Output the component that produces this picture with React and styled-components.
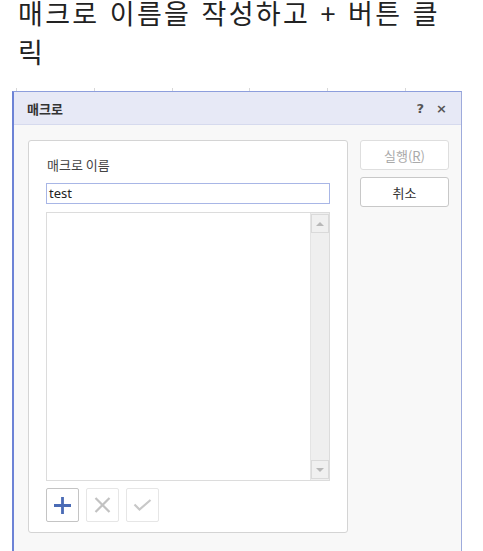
import React from "react";
import styled, { createGlobalStyle } from "styled-components";

const Global = createGlobalStyle`
  html, body { margin: 0; padding: 0; background: #fff; }
  body { font-family: "Noto Sans CJK KR", "Noto Sans", sans-serif; }
`;

const Page = styled.div`
  width: 483px;
  height: 551px;
  overflow: hidden;
  background: #fff;
`;

const Heading = styled.h2`
  margin: -6px 0 0 0;
  padding: 0 0 0 18px;
  width: 428px;
  height: 80px;
  font-family: "Noto Sans CJK KR", sans-serif;
  font-weight: 400;
  font-size: 27px;
  line-height: 38.5px;
  letter-spacing: 2.3px;
  word-spacing: 2px;
  color: #222;
`;

const Ticks = styled.div`
  display: flex;
  margin: 14px 0 0 16px;
  height: 3px;
`;

const Tick = styled.div`
  width: 78px;
  border-left: 1px solid #d8d8d8;
`;

const Dialog = styled.div`
  margin-left: 12px;
  width: 450px;
  box-sizing: border-box;
  border-left: 2px solid #6d83d6;
  border-right: 1px solid #9eabdc;
  border-top: 1px solid #8d9edc;
  background: #f8f8f8;
  height: 470px;
`;

const TitleBar = styled.div`
  display: flex;
  align-items: center;
  justify-content: space-between;
  height: 32px;
  padding: 0 14px 0 13px;
  background: #e7e9f6;
  border-bottom: 1px solid #d6daee;
`;

const Title = styled.span`
  font-size: 13px;
  font-weight: 700;
  color: #333;
`;

const TitleIcons = styled.div`
  display: flex;
  gap: 12px;
  align-items: center;
  font-family: "DejaVu Sans", sans-serif;
  font-weight: 700;
  font-size: 13px;
  color: #555;
`;

const Body = styled.div`
  display: flex;
  gap: 12px;
  padding: 15px 0 0 14px;
  align-items: flex-start;
`;

const Group = styled.div`
  width: 320px;
  box-sizing: border-box;
  background: #fff;
  border: 1px solid #d4d4d4;
  border-radius: 3px;
  padding: 14px 16px 10px 18px;
  display: flex;
  flex-direction: column;
`;

const Label = styled.div`
  font-size: 13px;
  color: #444;
  line-height: 20px;
  height: 28px;
`;

const Input = styled.div`
  width: 284px;
  height: 21px;
  box-sizing: border-box;
  border: 1px solid #a8b6e6;
  font-family: "Noto Sans", sans-serif;
  font-size: 13px;
  line-height: 19px;
  padding-left: 2px;
  color: #222;
  margin-left: -1px;
`;

const List = styled.div`
  margin-top: 8px;
  margin-left: -1px;
  width: 284px;
  height: 269px;
  box-sizing: border-box;
  border: 1px solid #dcdcdc;
  display: flex;
  justify-content: flex-end;
`;

const Scrollbar = styled.div`
  width: 18px;
  background: #efefef;
  border-left: 1px solid #e4e4e4;
  display: flex;
  flex-direction: column;
  justify-content: space-between;
`;

const ScrollBtn = styled.div`
  height: 19px;
  box-sizing: border-box;
  border: 1px solid #dadada;
  background: #f0f0f0;
  display: flex;
  align-items: center;
  justify-content: center;
  margin: 1px 0;
`;

const Arrow = styled.div`
  width: 0;
  height: 0;
  border-left: 4px solid transparent;
  border-right: 4px solid transparent;
  ${(p) =>
    p.$up
      ? "border-bottom: 4px solid #b8b8b8;"
      : "border-top: 4px solid #b8b8b8;"}
`;

const Tools = styled.div`
  display: flex;
  gap: 7px;
  margin-top: 7px;
  margin-left: -1px;
`;

const ToolBtn = styled.div`
  width: 33px;
  height: 34px;
  box-sizing: border-box;
  border: 1px solid ${(p) => (p.$active ? "#c4c4c4" : "#e6e6e6")};
  border-radius: 2px;
  background: #fff;
  display: flex;
  align-items: center;
  justify-content: center;
`;

const Side = styled.div`
  display: flex;
  flex-direction: column;
  gap: 7px;
`;

const SideBtn = styled.div`
  width: 89px;
  height: 30px;
  box-sizing: border-box;
  border: 1px solid ${(p) => (p.$disabled ? "#dedede" : "#c8c8c8")};
  border-radius: 3px;
  background: #fff;
  display: flex;
  align-items: center;
  justify-content: center;
  font-size: 13px;
  color: ${(p) => (p.$disabled ? "#aaa" : "#333")};
`;

const U = styled.span`
  text-decoration: underline;
`;

export default function App() {
  return (
    <Page>
      <Global />
      <Heading>매크로 이름을 작성하고 + 버튼 클릭</Heading>
      <Ticks>
        {[0, 1, 2, 3, 4, 5].map((i) => (
          <Tick key={i} />
        ))}
      </Ticks>
      <Dialog>
        <TitleBar>
          <Title>매크로</Title>
          <TitleIcons>
            <span>?</span>
            <span>×</span>
          </TitleIcons>
        </TitleBar>
        <Body>
          <Group>
            <Label>매크로 이름</Label>
            <Input>test</Input>
            <List>
              <Scrollbar>
                <ScrollBtn>
                  <Arrow $up />
                </ScrollBtn>
                <ScrollBtn>
                  <Arrow />
                </ScrollBtn>
              </Scrollbar>
            </List>
            <Tools>
              <ToolBtn $active>
                <svg width="19" height="19" viewBox="0 0 19 19">
                  <path d="M9.5 1v17M1 9.5h17" stroke="#4a6bb5" strokeWidth="2.8" />
                </svg>
              </ToolBtn>
              <ToolBtn>
                <svg width="17" height="16" viewBox="0 0 17 16">
                  <path d="M1.5 1l14 14M15.5 1l-14 14" stroke="#c2c2c2" strokeWidth="2.2" />
                </svg>
              </ToolBtn>
              <ToolBtn>
                <svg width="19" height="12" viewBox="0 0 19 12">
                  <path d="M1.5 5.5l5 5 11-9.5" stroke="#c8c8c8" strokeWidth="2.2" fill="none" />
                </svg>
              </ToolBtn>
            </Tools>
          </Group>
          <Side>
            <SideBtn $disabled>
              실행(<U>R</U>)
            </SideBtn>
            <SideBtn>취소</SideBtn>
          </Side>
        </Body>
      </Dialog>
    </Page>
  );
}
